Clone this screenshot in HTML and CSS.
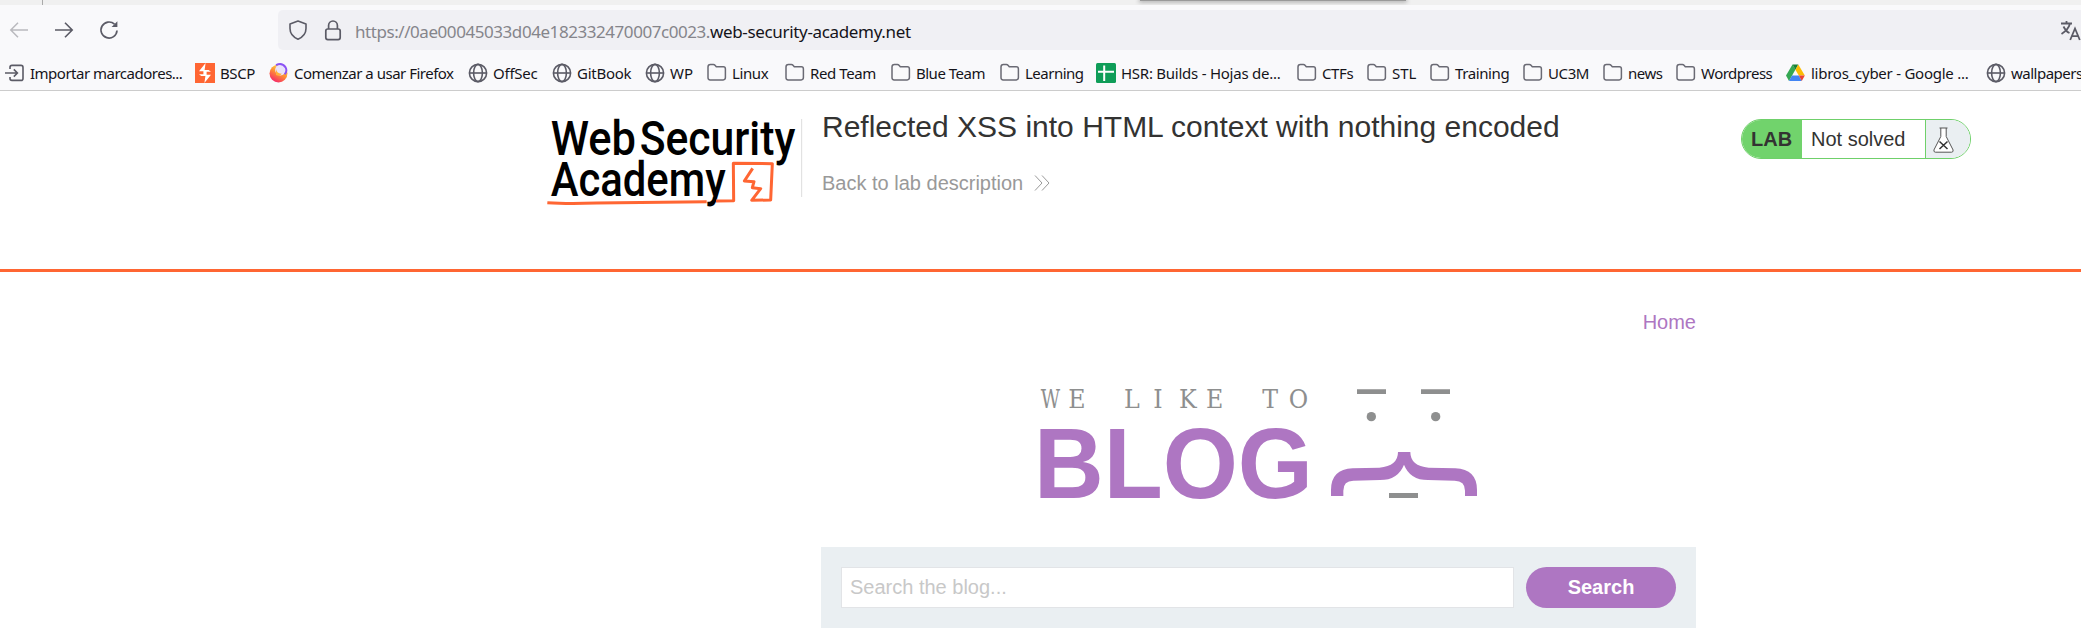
FILE: index.html
```html
<!DOCTYPE html>
<html lang="es">
<head>
<meta charset="utf-8">
<title>Reflected XSS into HTML context with nothing encoded</title>
<link rel="stylesheet" href="styles.css">
</head>
<body>
<svg class="defs" width="0" height="0">
  <defs>
    <symbol id="globe" viewBox="0 0 20 20"><g fill="none" stroke="#5b5b66" stroke-width="1.6"><circle cx="10" cy="10" r="8.6"/><ellipse cx="10" cy="10" rx="4.4" ry="8.6"/><path d="M1.4 10h17.2"/></g></symbol>
    <symbol id="folder" viewBox="0 0 20 20"><path d="M1 14.5V4Q1 1.6 3.4 1.6H6.4Q7.4 1.6 8 2.3L9.3 3.8H16.4Q18.4 3.8 18.4 6V14.6Q18.4 16.9 16.2 16.9H3.2Q1 16.9 1 14.5Z" fill="none" stroke="#6a6a74" stroke-width="1.5"/></symbol>
  </defs>
</svg>

<header class="browser">
  <div class="tabstrip"><span class="tab-edge"></span><span class="tab-popup"></span></div>
  <div class="navbar">
    <div class="nav-buttons">
      <svg width="20" height="20" viewBox="0 0 20 20" fill="none" stroke="#b9b9be" stroke-width="1.5"><path d="M19 10H2M9 2.8 1.8 10 9 17.2"/></svg>
      <svg width="20" height="20" viewBox="0 0 20 20" fill="none" stroke="#5b5b66" stroke-width="1.6"><path d="M1 10h17M11 2.8 18.2 10 11 17.2"/></svg>
      <svg width="20" height="20" viewBox="0 0 20 20"><path d="M18 10.5A8 8 0 1 1 15.5 4.2" fill="none" stroke="#5b5b66" stroke-width="1.7"/><path d="M18.4 1.2V7H12.6Z" fill="#5b5b66"/></svg>
    </div>
    <div class="urlbar">
      <svg width="20" height="20" viewBox="0 0 20 20" fill="none" stroke="#5b5b66" stroke-width="1.6" stroke-linejoin="round"><path d="M10 1 18 4V8.5C18 13.5 15 17 10 19.2C5 17 2 13.5 2 8.5V4Z"/></svg>
      <svg class="lock" width="18" height="21" viewBox="0 0 18 21" fill="none" stroke="#5b5b66" stroke-width="1.7"><rect x="1.8" y="9" width="14.4" height="10.6" rx="2"/><path d="M4.6 9V5.4a4.4 4.4 0 0 1 8.8 0V9"/></svg>
      <div class="url"><span class="url-host">https://0ae00045033d04e182332470007c0023.</span><span class="url-domain">web-security-academy.net</span></div>
      <svg class="translate" width="21" height="21" viewBox="0 0 21 21" fill="none" stroke="#5b5b66" stroke-width="1.8"><path d="M1 3.5H12M6.5 1V3.5M10 3.5Q8.5 9.5 1.5 14M3.5 6.5Q6 11.5 9.5 13M10.2 20 15 8.5 19.8 20M12 16.2H18"/></svg>
    </div>
  </div>
  <nav class="bookmarks">
    <a class="tight"><svg width="20" height="20" viewBox="0 0 20 20" fill="none" stroke="#5b5b66" stroke-width="1.6"><path d="M5 6V4.2Q5 2.4 7 2.4H16Q18 2.4 18 4.4V15.4Q18 17.4 16 17.4H7Q5 17.4 5 15.6V14M0 10H12M8.8 6.4 12.4 10 8.8 13.6"/></svg><span>Importar marcadores...</span></a>
    <a><svg width="20" height="20" viewBox="0 0 20 20"><path fill="#ff6633" d="M0 0h20v20H0z"/><path fill="#fff" d="M10.6 0 4 8.2H8.4V11.2H4L6.2 13H10.4L9.4 20 16 11.8H11.6V8.8H16L13.6 7H9.6Z"/></svg><span>BSCP</span></a>
    <a class="tight"><svg width="20" height="20" viewBox="0 0 20 20"><defs><linearGradient id="fx" x1=".8" y1=".1" x2=".3" y2="1"><stop offset="0" stop-color="#ffe14a"/><stop offset=".45" stop-color="#ff9332"/><stop offset="1" stop-color="#f5246c"/></linearGradient></defs><circle cx="9.5" cy="10.5" r="9" fill="url(#fx)"/><circle cx="11.5" cy="7" r="5.4" fill="#e9e2fb"/><path d="M7 2.2Q13-.8 16.6 4.4Q18.6 8.4 15.6 11.2" fill="none" stroke="#8b52f5" stroke-width="1.9"/><path d="M7 6Q8 11 13 10.6Q11 14 7 12Z" fill="#ffb13b"/></svg><span>Comenzar a usar Firefox</span></a>
    <a class="loose"><svg width="20" height="20"><use href="#globe"/></svg><span>OffSec</span></a>
    <a class="loose"><svg width="20" height="20"><use href="#globe"/></svg><span>GitBook</span></a>
    <a class="natural"><svg width="20" height="20"><use href="#globe"/></svg><span>WP</span></a>
    <a><svg width="20" height="20"><use href="#folder"/></svg><span>Linux</span></a>
    <a><svg width="20" height="20"><use href="#folder"/></svg><span>Red Team</span></a>
    <a class="tight"><svg width="20" height="20"><use href="#folder"/></svg><span>Blue Team</span></a>
    <a class="tight"><svg width="20" height="20"><use href="#folder"/></svg><span>Learning</span></a>
    <a class="loose"><svg width="20" height="20" viewBox="0 0 20 20"><rect width="20" height="20" rx="1.5" fill="#0f9d58"/><path d="M8.2 2.5V18M2 8.8H18" stroke="#fff" stroke-width="2"/></svg><span>HSR: Builds - Hojas de...</span></a>
    <a><svg width="20" height="20"><use href="#folder"/></svg><span>CTFs</span></a>
    <a class="natural"><svg width="20" height="20"><use href="#folder"/></svg><span>STL</span></a>
    <a><svg width="20" height="20"><use href="#folder"/></svg><span>Training</span></a>
    <a><svg width="20" height="20"><use href="#folder"/></svg><span>UC3M</span></a>
    <a class="tight"><svg width="20" height="20"><use href="#folder"/></svg><span>news</span></a>
    <a class="tight"><svg width="20" height="20"><use href="#folder"/></svg><span>Wordpress</span></a>
    <a class="loose"><svg width="20" height="20" viewBox="0 0 20 20"><path fill="#34a853" d="M6.5 1.5 0 12.5 3 18 9.5 6.5Z"/><path fill="#188038" d="M6.5 1.5H12.3L9.5 6.7Z"/><path fill="#fbbc04" d="M12.3 1.5 18.8 12.5H12.8L9.4 6.7Z"/><path fill="#4285f4" d="M3 18 6 12.5H12.8L15.8 18Z"/><path fill="#ea4335" d="M12.8 12.5H18.8L15.8 18Z"/></svg><span>libros_cyber - Google ...</span></a>
    <a class="tight"><svg width="20" height="20"><use href="#globe"/></svg><span>wallpapers</span></a>
  </nav>
</header>

<section class="lab-header">
  <svg class="academy-logo" width="290" height="129" viewBox="0 3 870 387">
    <g font-family="Roboto, sans-serif" font-weight="500" font-size="145">
      <text x="62" y="195" textLength="256" lengthAdjust="spacingAndGlyphs">Web</text>
      <text x="329" y="195" textLength="467" lengthAdjust="spacingAndGlyphs">Security</text>
      <text x="62" y="318" textLength="525" lengthAdjust="spacingAndGlyphs">Academy</text>
    </g>
    <path d="M52 338Q110 342 200 339L530 335M558 333L611 332L610 220L727 221L722 330L665 331L692 296L667 293L672 275L643 273L668 235" fill="none" stroke="#ff6633" stroke-width="9" stroke-linejoin="round"/>
    <path d="M815 87V321" stroke="#ddd" stroke-width="3"/>
  </svg>
  <div class="lab-title">
    <h2>Reflected XSS into HTML context with nothing encoded</h2>
    <a class="back"><span>Back to lab description</span>
      <svg width="16" height="16" viewBox="0 0 16 16" fill="none" stroke="#999" stroke-width="1"><path d="M1 .5 8 8 1 15.5M8 .5 15 8 8 15.5"/></svg></a>
  </div>
  <div class="lab-status">
    <span class="lab-tag">LAB</span>
    <span class="lab-text">Not solved</span>
    <span class="lab-flask"><svg width="21" height="26" viewBox="0 0 21 26"><path d="M6.5 1H14.5M7.8 1V9.5L.9 23Q.6 25.2 2.4 25.2H18.6Q20.4 25.2 20.1 23L13.2 9.5V1" fill="#fff" stroke="#555" stroke-width="1"/><path d="M6.5 14.5 14.5 22M14.5 14.5 6.5 22" stroke="#333" stroke-width="1.5"/></svg></span>
  </div>
</section>

<main class="blog">
  <nav class="blog-nav"><a>Home</a></nav>
  <svg class="blog-logo" width="480" height="140" viewBox="0 0 1440 420">
    <g fill="#8e8f8f" font-family="'DejaVu Serif Condensed', 'DejaVu Serif', serif" font-size="79">
      <text x="62" y="115" textLength="58" lengthAdjust="spacingAndGlyphs">W</text>
      <text y="115" x="145 312 400 477 558 727 806">ELIKETO</text>
    </g>
    <text x="42" y="383" fill="#ae76c2" font-family="Liberation Sans, Arial, sans-serif" font-weight="700" font-size="300" textLength="837" lengthAdjust="spacingAndGlyphs">BLOG</text>
    <g fill="#8e8f8f"><path d="M1011 58h87v14h-87zM1203 58h87v14h-87zM1107 369h87v15h-87z"/><circle cx="1054" cy="140" r="14"/><circle cx="1247" cy="140" r="14"/></g>
    <path d="M933 378V360Q933 298 998 295L1078 293Q1134 288 1134 246H1171Q1171 288 1226 293L1306 295Q1371 298 1371 360V378H1335V362Q1335 332 1304 332L1224 330Q1170 330 1152 284Q1134 330 1080 330L1000 332Q970 332 970 362V378Z" fill="#ae76c2"/>
  </svg>
  <form class="search">
    <input type="text" placeholder="Search the blog...">
    <button type="button">Search</button>
  </form>
</main>
</body>
</html>
```
FILE: styles.css
```css
* { box-sizing: border-box; }
body { margin: 0; background: #fff; color: #333332; font-family: "Liberation Sans", Arial, sans-serif; font-size: 20px; overflow: hidden; }
svg { display: block; flex: none; }
.defs { position: absolute; }

.browser { height: 91px; background: #f9f9fb; border-bottom: 1px solid #ccc; font-family: "Noto Sans", sans-serif; color: #15141a; overflow: hidden; }
.tabstrip { height: 5px; background: #f0f0f0; display: flex; overflow: hidden; }
.tab-edge { width: 43px; border-right: 1px solid #aaa; }
.tab-popup { margin-left: 1097px; width: 266px; height: 1px; background: #999; box-shadow: 0 0 4px 1px #999; }
.navbar { height: 50px; display: flex; align-items: center; padding-left: 9px; }
.nav-buttons { display: flex; gap: 25px; width: 269px; }
.urlbar { flex: 1; height: 40px; background: #f0f0f4; border-radius: 5px 0 0 5px; display: flex; align-items: center; padding-left: 10px; }
.lock { margin-left: 16px; }
.url { margin-left: 13px; font-size: 17px; line-height: 24px; padding-top: 3px; white-space: nowrap; }
.url-host { color: #85858b; letter-spacing: -0.44px; }
.url-domain { letter-spacing: -0.34px; }
.translate { margin-left: auto; }
.bookmarks { height: 36px; display: grid; align-items: center; font-size: 15px; white-space: nowrap; letter-spacing: -0.4px;
  grid-template-columns: 190px 74px 199px 84px 93px 62px 78px 106px 109px 96px 201px 70px 63px 93px 80px 73px 110px 200px 100px; padding-left: 5px; }
.bookmarks a { display: flex; align-items: center; gap: 5px; }
.bookmarks .tight { letter-spacing: -0.5px; }
.bookmarks .loose { letter-spacing: -0.25px; }
.bookmarks .natural { letter-spacing: 0; }

.lab-header { height: 181px; border-bottom: 3px solid #ff6633; display: flex; padding-left: 530px; }
.lab-title { padding: 19px 0 0 2px; }
.lab-title h2 { margin: 0; font-size: 30px; font-weight: 400; line-height: 34px; white-space: nowrap; }
.back { display: flex; align-items: center; gap: 11px; color: #999; line-height: 24px; margin-top: 27px; }
.lab-status { margin: 28px 110px 0 auto; width: 230px; height: 40px; border: 1px solid #6fd06a; border-radius: 20px; overflow: hidden; display: flex; line-height: 38px; }
.lab-tag { width: 60px; padding-left: 9px; background: #71d36c; font-weight: 700; }
.lab-text { width: 123px; padding-left: 9px; }
.lab-flask { flex: 1; background: #eaeff2; border-left: 1px solid #6fd06a; padding: 7px 0 0 7px; }

.blog { width: 876px; margin-left: 821px; }
.blog-nav { height: 98px; padding: 38px 1px 0 0; line-height: 24px; text-align: right; color: #ae76c2; }
.blog-logo { margin-left: 199px; }
.search { margin: 37px 0 0; height: 81px; width: 875px; padding: 20px; background: #eaeff2; display: flex; gap: 12px; }
.search input { flex: 1; height: 41px; border: 1px solid #e2e4e7; padding: 0 8px; font: 20px "Liberation Sans", Arial, sans-serif; background: #fff; }
.search input::placeholder { color: #c8c8c8; }
.search button { width: 150px; height: 41px; border: 0; border-radius: 21px; background: #ae76c2; color: #fff; font: 700 20px "Liberation Sans", Arial, sans-serif; }
```
